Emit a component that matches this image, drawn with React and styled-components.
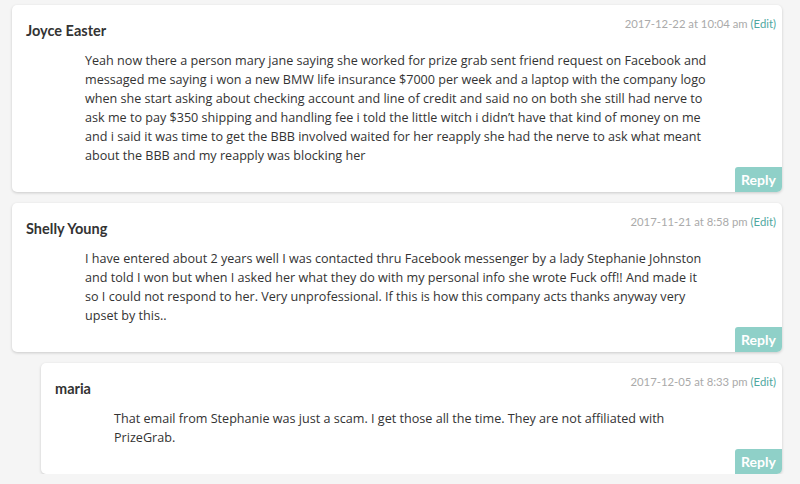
import React from "react";
import styled, { createGlobalStyle } from "styled-components";

const GlobalStyle = createGlobalStyle`
  html, body {
    margin: 0;
    padding: 0;
    background: #f5f5f5;
  }
  body {
    font-family: Lato, "Liberation Sans", sans-serif;
    color: #333;
  }
`;

const Page = styled.div`
  padding: 5px 18px 0 12px;
  display: flex;
  flex-direction: column;
  gap: 11px;
`;

const Card = styled.div`
  background: #fff;
  border-radius: 5px;
  box-shadow: 0 1px 3px rgba(0, 0, 0, 0.18);
  margin-left: ${(p) => (p.$depth ? p.$depth * 29 : 0)}px;
  display: flex;
  flex-direction: column;
`;

const Header = styled.div`
  display: flex;
  justify-content: space-between;
  align-items: flex-start;
  padding: 11px 6px 0 14px;
  height: 35px;
`;

const Name = styled.div`
  margin-top: 5px;
  font-size: 14.5px;
  line-height: 20px;
  font-weight: 700;
  color: #333;
`;

const Meta = styled.div`
  font-size: 11.3px;
  line-height: 16px;
  color: #aaa;
`;

const EditLink = styled.a`
  color: #4fa8a0;
  text-decoration: none;
`;

const Body = styled.p`
  margin: 0 70px 2px 73px;
  font-family: "Open Sans", Lato, sans-serif;
  font-size: 12.6px;
  line-height: 19px;
  color: #333;
`;

const Footer = styled.div`
  display: flex;
  justify-content: flex-end;
`;

const ReplyButton = styled.button`
  height: 25px;
  width: 47px;
  padding: 0;
  border: none;
  border-radius: 3px 0 5px 0;
  background: #8fd0c8;
  color: #fff;
  font-family: inherit;
  font-size: 14px;
  font-weight: 700;
  cursor: pointer;
`;

const comments = [
  {
    name: "Joyce Easter",
    date: "2017-12-22 at 10:04 am",
    depth: 0,
    text:
      "Yeah now there a person mary jane saying she worked for prize grab sent friend request on Facebook and messaged me saying i won a new BMW life insurance $7000 per week and a laptop with the company logo when she start asking about checking account and line of credit and said no on both she still had nerve to ask me to pay $350 shipping and handling fee i told the little witch i didn\u2019t have that kind of money on me and i said it was time to get the BBB involved waited for her reapply she had the nerve to ask what meant about the BBB and my reapply was blocking her",
  },
  {
    name: "Shelly Young",
    date: "2017-11-21 at 8:58 pm",
    depth: 0,
    text:
      "I have entered about 2 years well I was contacted thru Facebook messenger by a lady Stephanie Johnston and told I won but when I asked her what they do with my personal info she wrote Fuck off!! And made it so I could not respond to her. Very unprofessional. If this is how this company acts thanks anyway very upset by this..",
  },
  {
    name: "maria",
    date: "2017-12-05 at 8:33 pm",
    depth: 1,
    text:
      "That email from Stephanie was just a scam. I get those all the time. They are not affiliated with PrizeGrab.",
  },
];

export default function App() {
  return (
    <>
      <GlobalStyle />
      <Page>
        {comments.map((c) => (
          <Card key={c.name} $depth={c.depth}>
            <Header>
              <Name>{c.name}</Name>
              <Meta>
                {c.date} <EditLink href="#">(Edit)</EditLink>
              </Meta>
            </Header>
            <Body>{c.text}</Body>
            <Footer>
              <ReplyButton>Reply</ReplyButton>
            </Footer>
          </Card>
        ))}
      </Page>
    </>
  );
}
